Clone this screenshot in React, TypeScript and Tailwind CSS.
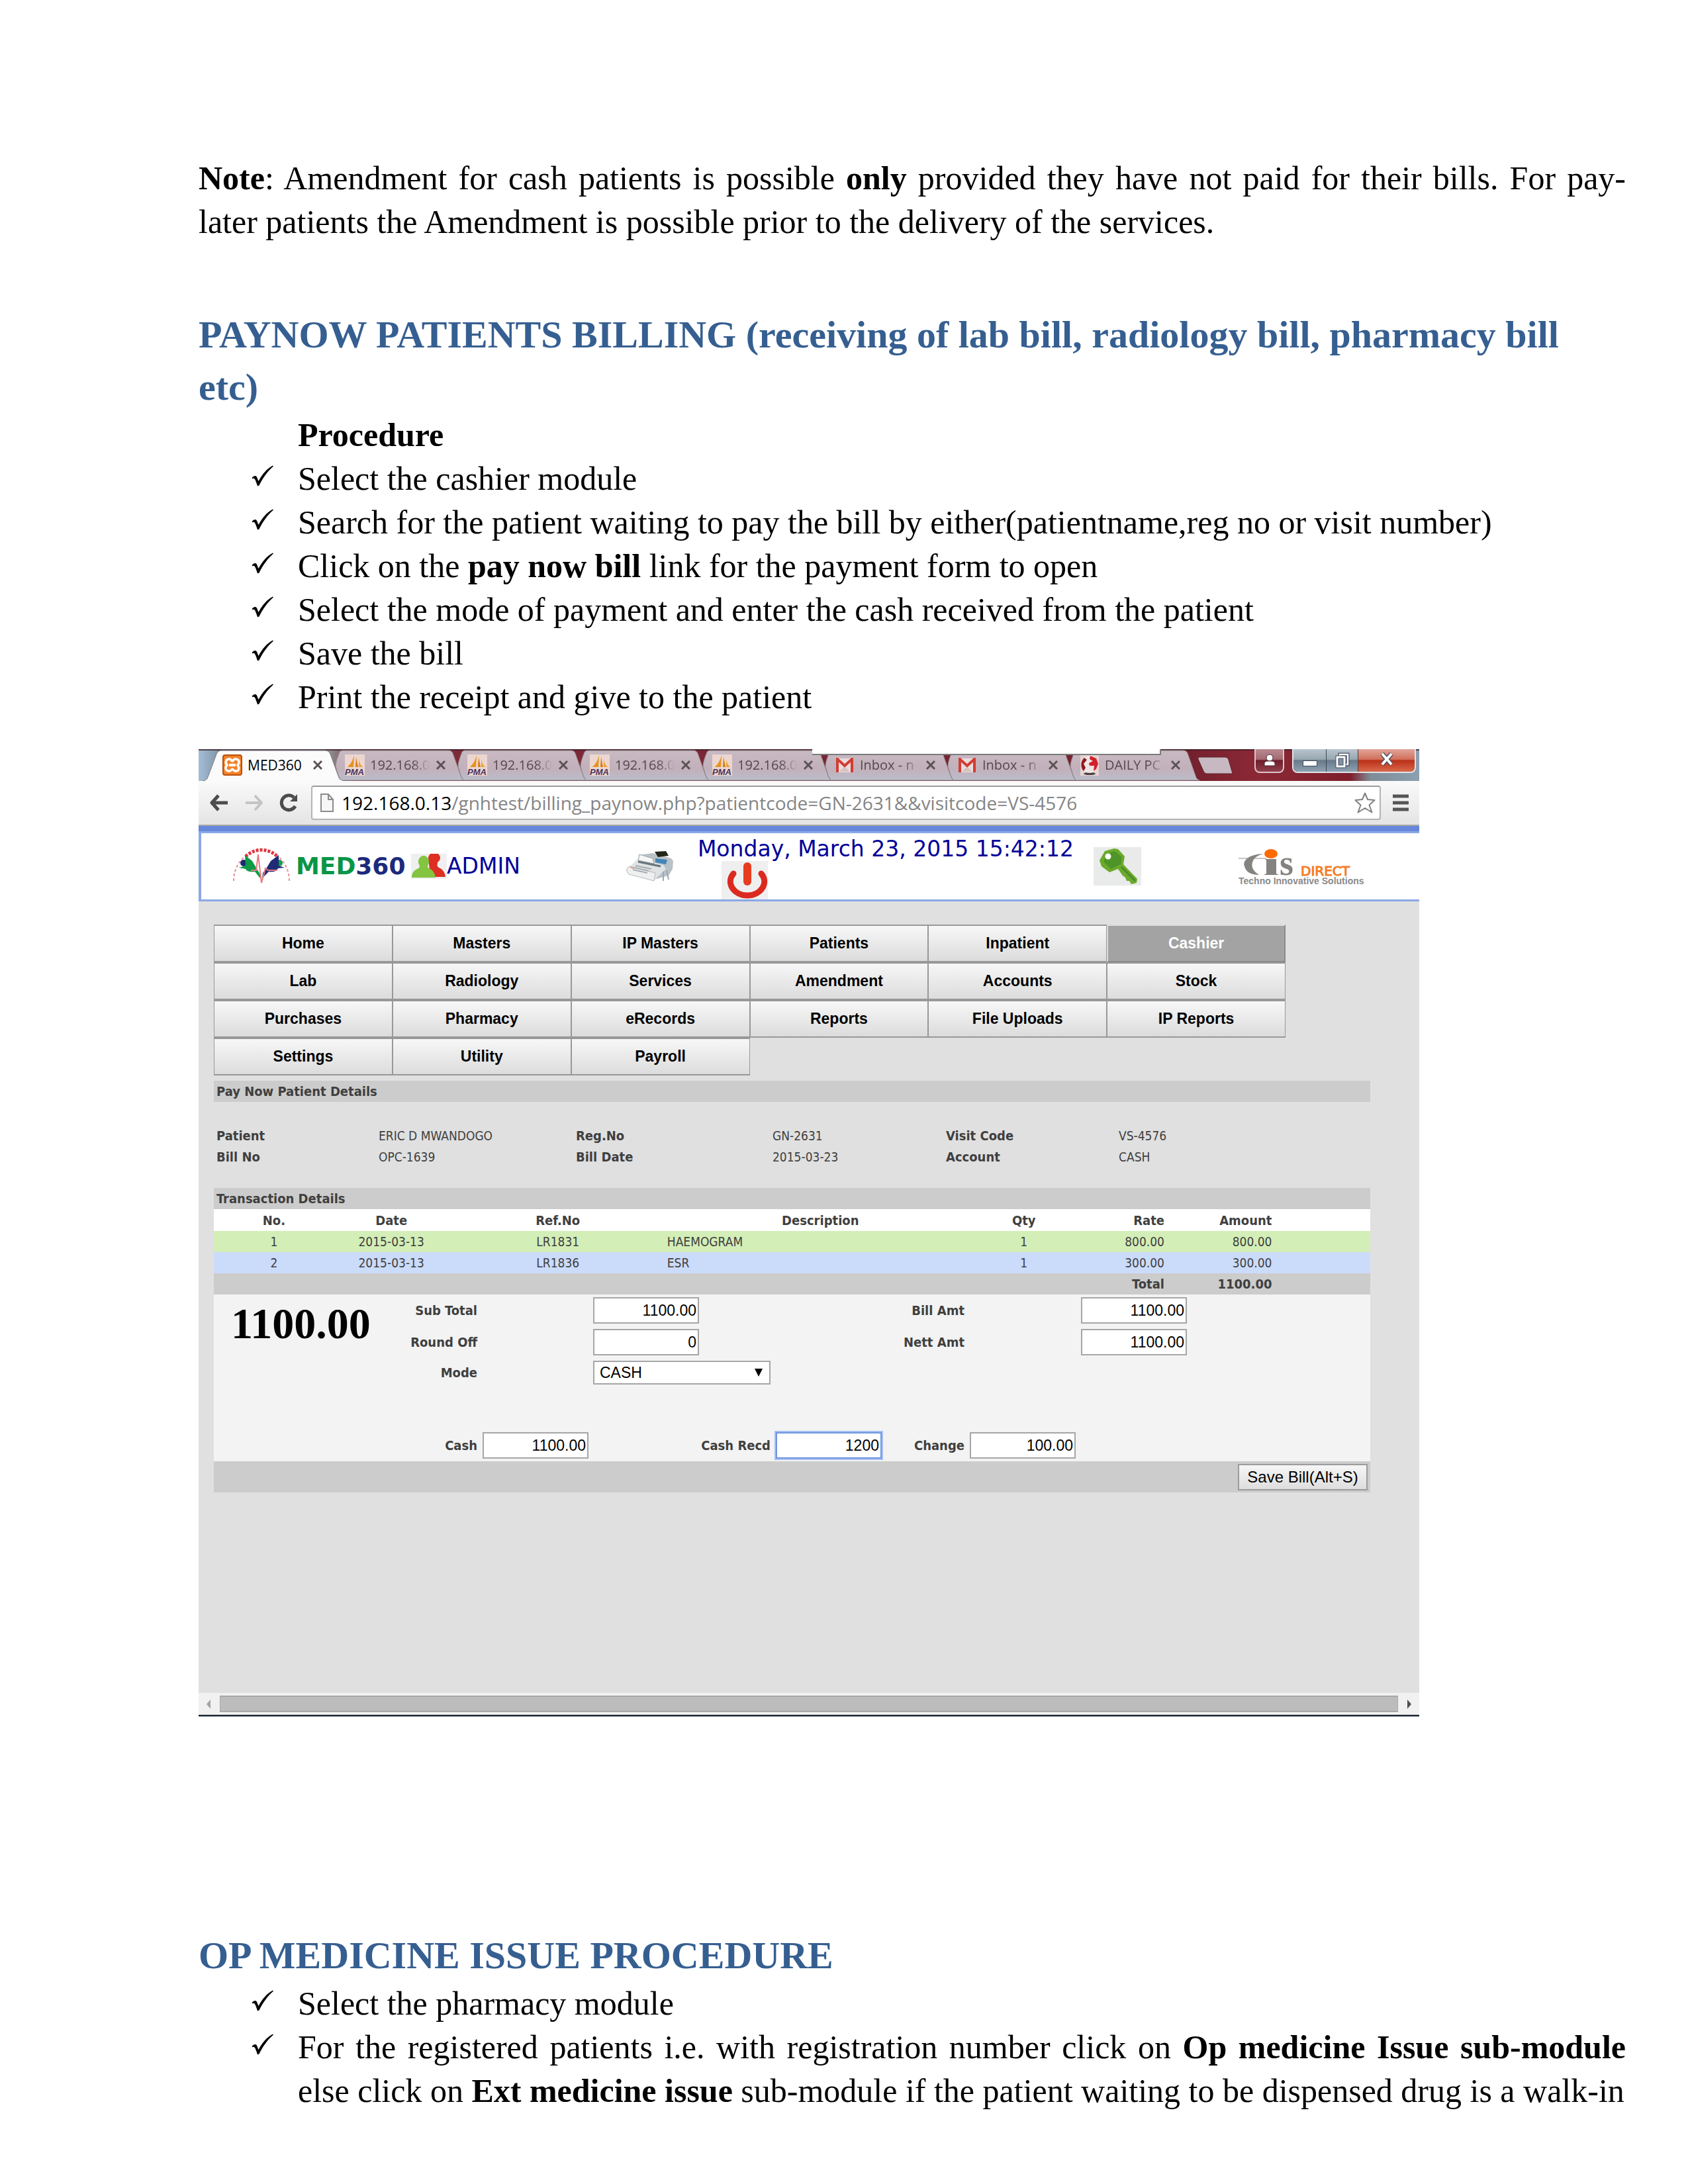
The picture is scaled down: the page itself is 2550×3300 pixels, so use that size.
import React from "react";

const navItems = [
  "Home", "Masters", "IP Masters", "Patients", "Inpatient", "Cashier",
  "Lab", "Radiology", "Services", "Amendment", "Accounts", "Stock",
  "Purchases", "Pharmacy", "eRecords", "Reports", "File Uploads", "IP Reports",
  "Settings", "Utility", "Payroll",
];

const transactions = [
  { no: 1, date: "2015-03-13", ref: "LR1831", description: "HAEMOGRAM", qty: 1, rate: "800.00", amount: "800.00", tone: "bg-[#d3eeb7]" },
  { no: 2, date: "2015-03-13", ref: "LR1836", description: "ESR", qty: 1, rate: "300.00", amount: "300.00", tone: "bg-[#cbdbfa]" },
];

const inactiveTabs = [
  { icon: "pma", label: "192.168.0" },
  { icon: "pma", label: "192.168.0" },
  { icon: "pma", label: "192.168.0" },
  { icon: "pma", label: "192.168.0" },
  { icon: "gmail", label: "Inbox - n" },
  { icon: "gmail", label: "Inbox - n" },
  { icon: "daily", label: "DAILY PC" },
];

/* ---------- document text ---------- */

function CheckBullet() {
  return (
    <svg viewBox="0 0 34 32" className="mt-[13px] h-8 w-[34px] shrink-0" aria-hidden="true">
      <path d="M1 18.5 C3 16 6 15 7.5 17 C9 19.500 9.500 22 10.500 24 C16 14 23 5 32 0.500 L33 1.500 C25 8 17 19 11.500 30.500 L9 31.500 C7.500 27 6 22 4.500 20.500 C3.500 19.500 2.500 19.500 1 20.500 Z" fill="#000" />
    </svg>
  );
}

function Step({ children }: { children: React.ReactNode }) {
  return (
    <li className="flex gap-9 pl-20">
      <CheckBullet />
      <span className="flex-1 text-justify">{children}</span>
    </li>
  );
}

function Heading({ children, className }: { children: React.ReactNode; className: string }) {
  return <h2 className={`text-[58px] leading-[79px] font-bold text-[#365f91] ${className}`}>{children}</h2>;
}

/* ---------- browser chrome ---------- */

function XamppIcon() {
  return (
    <svg viewBox="0 0 30 32" className="h-8 w-[30px] shrink-0" aria-hidden="true">
      <rect x="1" y="1" width="28" height="30" rx="3" fill="#f5822a" stroke="#b9500c" strokeWidth="2" />
      <path d="M9 7c4-1 5 3 6 3s2-4 6-3c5 1 5 6 2 9 3 4 2 9-2 9-4 1-5-3-6-3s-2 4-6 3c-5-1-5-6-2-9-3-3-2-8 2-9z" fill="none" stroke="#fff" strokeWidth="3.500" />
      <path d="M10 16h10" stroke="#fff" strokeWidth="4" />
    </svg>
  );
}

function PmaIcon() {
  return (
    <svg viewBox="0 0 30 32" className="h-8 w-[30px] shrink-0 overflow-visible" aria-hidden="true">
      <rect width="30" height="32" fill="#ecd6cf" />
      <path d="M14 1 C12 9 9 14 4 19 L13 19 Z" fill="#e5921c" />
      <path d="M17 4 L16 19 L20 19 Z" fill="#d97a12" />
      <path d="M21 5 C21 12 24 16 27 19 L21 19 Z" fill="#eda23a" />
      <text x="0" y="31" fontSize="13" fontWeight="700" fontStyle="italic" fontFamily="Liberation Sans, sans-serif" fill="#4a3260">PMA</text>
    </svg>
  );
}

function GmailIcon() {
  return (
    <svg viewBox="0 0 26 22" className="h-[22px] w-[26px] shrink-0" aria-hidden="true">
      <rect x="1" y="1" width="24" height="21" fill="#eadcdc" />
      <path d="M5 21 L13 13 L21 21 Z" fill="#d8c2c2" />
      <path d="M2 22 V2 L13 12 L24 2 V22" fill="none" stroke="#d23c33" strokeWidth="4" />
    </svg>
  );
}

function DailyIcon() {
  return (
    <svg viewBox="0 0 28 32" className="h-8 w-7 shrink-0" aria-hidden="true">
      <rect width="28" height="32" fill="#e6d3d2" />
      <ellipse cx="14" cy="29" rx="9" ry="2" fill="#4a4040" />
      <circle cx="14" cy="15" r="13" fill="#eee6e4" />
      <path d="M6 5 C0 10 0 20 5 25 L8 20 L5 14 L10 8 Z" fill="#8f1a20" />
      <path d="M15 2 L24 6 L27 14 L24 22 L20 25 L21 17 L14 17 L13 13 L19 10 L14 7 Z" fill="#d3202b" />
    </svg>
  );
}

function CloseGlyph() {
  return (
    <svg viewBox="0 0 14 14" className="h-3.5 w-3.5 shrink-0" aria-hidden="true">
      <path d="M1 1 L13 13 M13 1 L1 13" stroke="#5c5255" strokeWidth="3" />
    </svg>
  );
}

function TabStrip() {
  return (
    <div className="relative flex h-12 bg-[linear-gradient(90deg,#a3bdd6_0px,#8298a8_30px,#90a2a2_190px,#7f2c3a_240px,#75202e_1500px,#8c2836_1600px,#7e1f2c_1740px,#7f8c96_1770px,#8ba0b2_1844px)] pl-2.5">
      <div className="absolute inset-x-0 top-0 h-0.5 bg-[#3c2028]/80" />
      <button type="button" className="relative flex w-[200px] items-center pl-[26px] text-[21px] text-black">
        <svg viewBox="0 0 210 48" preserveAspectRatio="none" className="absolute top-0 -left-1 h-12 w-[214px]" aria-hidden="true">
          <path d="M0 48 C7 47 7 44 9 39 L20 9 C22 3 24 2 29 2 H181 C187 2 188 4 190 9 L201 40 C203 46 205 47 210 48 Z" fill="#fbfbfb" stroke="#7d7f85" strokeWidth="1" />
          <path d="M4 48 H207" stroke="#fbfbfb" strokeWidth="3" />
        </svg>
        <span className="relative flex items-center">
          <XamppIcon />
          <span className="ml-2 w-[99px] text-left">MED360</span>
          <CloseGlyph />
        </span>
      </button>
      {inactiveTabs.map((tab, i) => (
        <button key={i} type="button" className="relative flex w-[185px] items-center pl-[11px] text-[20px] text-[#55474d]">
          <svg viewBox="0 0 196 48" preserveAspectRatio="none" className="absolute top-0 -left-1 h-12 w-[196px]" aria-hidden="true">
            <defs>
              <linearGradient id={`tab-${i}`} x1="0" y1="0" x2="0" y2="1">
                <stop offset="0" stopColor="#c8bac3" />
                <stop offset="0.6" stopColor="#c2b0ba" />
                <stop offset="1" stopColor="#b9bdca" />
              </linearGradient>
            </defs>
            <path d="M10 47 C7 45 5 40 4 36 L1 26 C1 20 4 12 6 7 C7 3 9 2 12 2 H172 C176 2 178 5 179 9 L190 40 C191 44 193 46 196 47 Z" fill={`url(#tab-${i})`} stroke="#92898f" strokeWidth="1" />
          </svg>
          <span className="relative flex items-center">
            <span className="flex w-[30px] justify-center">
              {tab.icon === "pma" && <PmaIcon />}
              {tab.icon === "gmail" && <GmailIcon />}
              {tab.icon === "daily" && <DailyIcon />}
            </span>
            <span className="ml-2 w-[100px] text-left whitespace-nowrap [mask-image:linear-gradient(90deg,#000_65%,transparent_90%)]">{tab.label}</span>
            <CloseGlyph />
          </span>
        </button>
      ))}
      <button type="button" aria-label="New tab" className="relative mt-[11px] ml-1 h-7 w-[54px]">
        <svg viewBox="0 0 54 28" className="h-7 w-[54px]" aria-hidden="true">
          <path d="M3 1 H42 Q46 1 47 5 L53 26 H14 Q10 26 9 22 L1 4 Q0 1 3 1 Z" fill="#c7b8c1" stroke="#5d2630" />
        </svg>
      </button>
      <div className="absolute top-0 left-[927px] h-[9px] w-[527px] border-r-2 border-b-2 border-[#7c7c7c] bg-white" />
      <div className="absolute top-0 right-[5px] flex h-9 gap-3">
        <button type="button" aria-label="User" className="flex w-[45px] items-center justify-center rounded-b-lg border-2 border-t-0 border-[#ddc4ca] bg-[linear-gradient(180deg,#b98a92_0%,#a46a74_45%,#6e1c2a_50%,#90404d_100%)]">
          <svg viewBox="0 0 20 20" className="h-5 w-5" aria-hidden="true">
            <circle cx="10" cy="6" r="5" fill="#fff" stroke="#4a3036" />
            <path d="M2 18 V15 Q2 11 7 11 H13 Q18 11 18 15 V18 Z" fill="#fff" stroke="#4a3036" />
          </svg>
        </button>
        <div className="flex overflow-hidden rounded-b-lg border-2 border-t-0 border-[#dfe4e8]">
          <button type="button" aria-label="Minimize" className="flex w-[50px] items-end justify-center border-r border-[#3e4954] bg-[linear-gradient(180deg,#b9c4cc_0%,#98a7b1_45%,#67798a_50%,#8da2b2_100%)] pb-2">
            <span className="h-[9px] w-[22px] border border-[#3e4954] bg-white" />
          </button>
          <button type="button" aria-label="Restore" className="flex w-12 items-center justify-center border-r border-[#3e4954] bg-[linear-gradient(180deg,#b9c4cc_0%,#98a7b1_45%,#67798a_50%,#8da2b2_100%)]">
            <svg viewBox="0 0 24 24" className="h-6 w-6" aria-hidden="true">
              <rect x="8" y="3" width="12" height="15" fill="none" stroke="#454f63" strokeWidth="5" />
              <rect x="8" y="3" width="12" height="15" fill="none" stroke="#fff" strokeWidth="2.500" />
              <rect x="4" y="7" width="11" height="14" fill="#8190a0" stroke="#454f63" strokeWidth="5" />
              <rect x="4" y="7" width="11" height="14" fill="none" stroke="#fff" strokeWidth="3" />
            </svg>
          </button>
          <button type="button" aria-label="Close" className="flex w-[85px] items-center justify-center bg-[linear-gradient(180deg,#e0a598_0%,#d2705c_45%,#bb3018_50%,#d9694c_100%)]">
            <svg viewBox="0 0 22 20" className="mb-1 h-5 w-[22px]" aria-hidden="true">
              <path d="M4 2 L18 18 M18 2 L4 18" stroke="#4d5065" strokeWidth="7" />
              <path d="M4 2 L18 18 M18 2 L4 18" stroke="#fff" strokeWidth="4" />
            </svg>
          </button>
        </div>
      </div>
    </div>
  );
}

function Toolbar() {
  return (
    <div className="flex h-[68px] items-center border-b-2 border-[#a8a8a8] bg-[linear-gradient(180deg,#fafafa,#e4e4e4)] pr-4 pl-[17px]">
      <button type="button" aria-label="Back" className="mr-[25px]">
        <svg viewBox="0 0 28 26" className="h-[26px] w-7" aria-hidden="true">
          <path d="M13 2 L3 13 L13 24 M3 13 H27" fill="none" stroke="#4c4c4c" strokeWidth="5" strokeLinejoin="round" />
        </svg>
      </button>
      <button type="button" aria-label="Forward" className="mr-6">
        <svg viewBox="0 0 28 26" className="h-[26px] w-7" aria-hidden="true">
          <path d="M15 2 L25 13 L15 24 M25 13 H1" fill="none" stroke="#c4c4c4" strokeWidth="4" strokeLinejoin="round" />
        </svg>
      </button>
      <button type="button" aria-label="Reload" className="mr-5">
        <svg viewBox="0 0 28 28" className="h-7 w-7" aria-hidden="true">
          <path d="M24 19 A11 11 0 1 1 22 6" fill="none" stroke="#4c4c4c" strokeWidth="5" />
          <path d="M27 1 V12 H16 Z" fill="#4c4c4c" />
        </svg>
      </button>
      <div className="flex h-[52px] flex-1 items-center rounded-sm border-2 border-[#b4b4b4] border-t-[#9c9c9c] bg-white pr-1.5 pl-3">
        <svg viewBox="0 0 20 28" className="mr-3 h-7 w-5 shrink-0" aria-hidden="true">
          <path d="M1 1 H12 L19 9 V27 H1 Z" fill="#f6f6f6" stroke="#8b8b8b" strokeWidth="2" />
          <path d="M12 1 V9 H19" fill="none" stroke="#8b8b8b" strokeWidth="2" />
        </svg>
        <a href="#billing" className="flex-1 text-[28px] leading-9 whitespace-nowrap text-[#858585]">
          <span className="text-black">192.168.0.13</span>/gnhtest/billing_paynow.php?patientcode=GN-2631&amp;&amp;visitcode=VS-4576
        </a>
        <svg viewBox="0 0 32 32" className="h-8 w-8 shrink-0" aria-hidden="true">
          <path d="M16 1.500 L20 11 L30.500 12 L22.500 19.500 L26.500 30.500 L16 24 L5.500 30.500 L9.500 19.500 L1.500 12 L12 11 Z" fill="#fff" stroke="#808080" strokeWidth="2" strokeLinejoin="round" />
        </svg>
      </div>
      <button type="button" aria-label="Menu" className="ml-[18px]">
        <svg viewBox="0 0 24 26" className="h-[26px] w-6" aria-hidden="true">
          <path d="M0 3 H24 M0 13 H24 M0 23 H24" stroke="#555" strokeWidth="5" />
        </svg>
      </button>
    </div>
  );
}

/* ---------- application header ---------- */

function Med360Mark() {
  return (
    <svg viewBox="0 0 88 56" className="h-14 w-[88px] shrink-0" aria-hidden="true">
      <path d="M2 50 C2 36 8 22 18 14" fill="none" stroke="#ee8f95" strokeWidth="2" strokeDasharray="4 3" />
      <path d="M86 50 C86 36 80 22 70 14" fill="none" stroke="#ee8f95" strokeWidth="2" strokeDasharray="4 3" />
      <path d="M20 13 C34 0 54 0 68 13" fill="none" stroke="#e2333c" strokeWidth="5" strokeDasharray="4 2" />
      <circle cx="17" cy="23" r="5" fill="#1d2a72" />
      <circle cx="71" cy="23" r="5" fill="#13a04a" />
      <path d="M19 11 L30 20 L36 30 L42 40 L42 46 L34 36 C27 37 22 36 20 32 L10 30 L20 27 Z" fill="#0e9a47" />
      <path d="M70 11 L58 20 L52 30 L46 38 L45 46 L55 36 C62 37 66 36 69 31 L79 30 L70 27 Z" fill="#1f2c75" />
      <path d="M28 34 H36 L39 10 L44 53 L50 31 L54 34 L68 34" fill="none" stroke="#ea7a80" strokeWidth="2" />
    </svg>
  );
}

function PeopleIcon() {
  return (
    <svg viewBox="0 0 54 38" className="h-[38px] w-[54px] shrink-0" aria-hidden="true">
      <rect width="54" height="38" fill="#efefef" />
      <path d="M26 7 A9 8 0 1 1 40 13 C40 18 38 18 42 21 C49 24 51 29 52 35 H36 L28 24 Z" fill="#dd2f22" />
      <path d="M19 3 A9 9 0 0 1 27 14 C25 18 24 20 27 22 C34 25 36 30 37 36 H1 C1 29 4 25 11 22 C14 20 13 18 11 14 A9 9 0 0 1 19 3 Z" fill="#83c441" />
    </svg>
  );
}

function RegisterIcon() {
  return (
    <svg viewBox="0 0 72 48" className="h-12 w-[72px] shrink-0" aria-hidden="true">
      <path d="M18 7 L40 4 L68 12 L71 16 L70 28 L64 38 L42 44 L40 30 Z" fill="#b9c2c8" />
      <path d="M2 28 L18 12 L56 22 L60 28 L42 45 L8 36 Z" fill="#dfe3e4" />
      <path d="M0 30 L4 24 L44 34 L42 46 L4 36 Z" fill="#eef0f0" stroke="#b5babc" />
      <path d="M20 6 L40 12 L42 20 L18 15 Z" fill="#f4f5f5" stroke="#9aa2a6" />
      <path d="M43 2 L60 1 L64 8 L48 10 Z" fill="#222718" />
      <path d="M44 12 L62 14 L60 21 L44 18 Z" fill="#4286b8" />
      <path d="M18 17 L52 24" stroke="#67757b" strokeWidth="3" />
      <path d="M12 26 L34 31 M14 23 L38 28 M10 29 L32 34" stroke="#a7adb0" strokeWidth="2" />
      <path d="M6 25 L12 27" stroke="#d99a92" strokeWidth="2" />
      <path d="M56 32 V46 M61 30 L64 44" stroke="#9ca8ae" strokeWidth="2" />
    </svg>
  );
}

function PowerIcon() {
  return (
    <svg viewBox="0 0 70 58" className="h-[58px] w-[70px]" aria-hidden="true">
      <rect width="70" height="58" fill="#efefef" />
      <path d="M18 19 A26 21 0 0 0 39 52 A26 21 0 0 0 60 19" fill="none" stroke="#db2a20" strokeWidth="9" strokeLinecap="round" />
      <path d="M39 8 V31" stroke="#e63c1f" strokeWidth="12" strokeLinecap="round" />
    </svg>
  );
}

function KeyIcon() {
  return (
    <svg viewBox="0 0 72 58" className="h-[58px] w-[72px] shrink-0" aria-hidden="true">
      <rect width="72" height="58" fill="#e9eaea" />
      <path d="M17 6 L31 2 L37 3 L47 14 L45 26 L66 48 L65 54 L57 56 L54 51 L50 51 L48 46 L44 43 L37 33 L24 38 L12 29 L9 20 Z" fill="#6aaa2c" />
      <path d="M20 10 L32 6 L43 15 L41 26 L26 33 L15 22 Z" fill="#4f9428" />
      <path d="M42 30 L63 51" stroke="#4b8b27" strokeWidth="3" />
      <circle cx="22" cy="14" r="4.500" fill="#fff" />
    </svg>
  );
}

function CisLogo() {
  return (
    <svg viewBox="0 0 196 54" className="h-[54px] w-[196px] shrink-0 overflow-visible" role="img" aria-label="CIS Direct - Techno Innovative Solutions">
      <path d="M0 15 H42" stroke="#b5b3b0" strokeWidth="1.500" />
      <path d="M38 8 C14 9 6 19 9 27 C11 35 18 40 31 40 C22 34 19 28 21 21 C23 14 29 10 38 8 Z" fill="#85837f" />
      <ellipse cx="49" cy="8" rx="10" ry="7" fill="#ff6a00" />
      <path d="M40 16 H57 V38 L61 40 H38 L42 38 V18 Z" fill="#85837f" />
      <text x="62" y="40" fontSize="54" fontWeight="700" fontFamily="Liberation Serif, serif" fill="#85837f">s</text>
      <text x="94" y="41" fontSize="20" fontFamily="DejaVu Sans, sans-serif" fill="#f57b22" stroke="#f57b22">DIRECT</text>
      <text x="0" y="54" fontSize="14" fontFamily="Liberation Sans, sans-serif" fontWeight="700" fill="#8a8a8a">Techno Innovative Solutions</text>
    </svg>
  );
}

function AppHeader() {
  return (
    <header className="border-t-8 border-[#6686da]">
      <div className="flex h-[106px] border-y-[3px] border-l-4 border-[#8aa8e6] bg-white pr-[77px] pl-[47px] font-['DejaVu_Sans',sans-serif] text-[33px] leading-9 text-[#000099]">
        <div className="flex items-center">
          <Med360Mark />
          <span className="ml-2 w-[174px] text-[36px] font-bold text-[#1c2a7c]">
            <span className="text-[#079647]">MED</span>360
          </span>
          <PeopleIcon />
          <span>ADMIN</span>
        </div>
        <div className="ml-40 flex items-center">
          <RegisterIcon />
        </div>
        <div className="ml-9 flex flex-col">
          <time className="pt-1.5">Monday, March 23, 2015 15:42:12</time>
          <button type="button" aria-label="Log out" className="ml-9 h-[58px] w-[70px]">
            <PowerIcon />
          </button>
        </div>
        <div className="ml-[30px] flex items-center">
          <KeyIcon />
        </div>
        <div className="ml-auto flex items-center">
          <CisLogo />
        </div>
      </div>
    </header>
  );
}

/* ---------- billing page ---------- */

function SectionBar({ children }: { children: React.ReactNode }) {
  return <h3 className="h-8 bg-[#cccccc] pl-1 leading-8 font-bold">{children}</h3>;
}

function Field({ id, label, value, cell, labelCell, focused }: { id: string; label: string; value: string; cell: string; labelCell: string; focused?: boolean }) {
  return (
    <>
      <label htmlFor={id} className={`self-center pr-1 text-right font-bold whitespace-nowrap ${labelCell}`}>{label}</label>
      <div className={`self-center pl-1 ${cell}`}>
        <input
          id={id}
          defaultValue={value}
          className={`block h-10 w-40 border-2 bg-white pr-0.5 text-right font-['Liberation_Sans',sans-serif] text-[23px] text-black ${focused ? "border-[#7096dc] outline-2 outline-[#a3c0f5]" : "border-[#a6a6a6]"}`}
        />
      </div>
    </>
  );
}

function BillingPage() {
  return (
    <main className="bg-[#e0e0e0] pt-[35px] pr-[74px] pb-[303px] pl-[23px] font-['DejaVu_Sans_Condensed','Noto_Sans',sans-serif] text-[20px] text-[#3f3f3f]">
      <nav className="mr-32 grid grid-cols-6">
        {navItems.map((item) => (
          <button
            key={item}
            type="button"
            className={
              item === "Cashier"
                ? "h-[57px] border-2 border-t-[#dcdcdc] border-r-[#8a8a8a] border-b-[#8a8a8a] border-l-[#dcdcdc] bg-[#a3a3a3] font-['Liberation_Sans',sans-serif] text-[23px] font-bold text-white"
                : "h-[57px] border-x border-y-2 border-[#989898] bg-[linear-gradient(180deg,#f7f7f7,#dcdcdc)] font-['Liberation_Sans',sans-serif] text-[23px] font-bold text-black"
            }
          >
            {item}
          </button>
        ))}
      </nav>

      <div className="mt-2">
        <SectionBar>Pay Now Patient Details</SectionBar>
      </div>
      <dl className="grid grid-cols-[245fr_298fr_297fr_262fr_261fr_384fr] pt-[35px] pb-[31px] leading-8">
        <dt className="pl-1 font-bold">Patient</dt>
        <dd className="pl-1 text-[19px]">ERIC D MWANDOGO</dd>
        <dt className="pl-1 font-bold">Reg.No</dt>
        <dd className="pl-1 text-[19px]">GN-2631</dd>
        <dt className="pl-1 font-bold">Visit Code</dt>
        <dd className="pl-1 text-[19px]">VS-4576</dd>
        <dt className="pl-1 font-bold">Bill No</dt>
        <dd className="pl-1 text-[19px]">OPC-1639</dd>
        <dt className="pl-1 font-bold">Bill Date</dt>
        <dd className="pl-1 text-[19px]">2015-03-23</dd>
        <dt className="pl-1 font-bold">Account</dt>
        <dd className="pl-1 text-[19px]">CASH</dd>
      </dl>

      <SectionBar>Transaction Details</SectionBar>
      <table className="w-full table-fixed border-collapse leading-8">
        <colgroup>
          <col className="w-[10.4%]" />
          <col className="w-[9.9%]" />
          <col className="w-[18.9%]" />
          <col className="w-[26.5%]" />
          <col className="w-[8.7%]" />
          <col className="w-[7.8%]" />
          <col className="w-[9.3%]" />
          <col />
        </colgroup>
        <thead>
          <tr className="h-[33px] bg-white">
            <th>No.</th>
            <th>Date</th>
            <th>Ref.No</th>
            <th>Description</th>
            <th>Qty</th>
            <th className="text-right">Rate</th>
            <th className="text-right">Amount</th>
            <td />
          </tr>
        </thead>
        <tbody>
          {transactions.map((row) => (
            <tr key={row.no} className={`text-center text-[19px] ${row.tone}`}>
              <td>{row.no}</td>
              <td>{row.date}</td>
              <td>{row.ref}</td>
              <td className="text-left">{row.description}</td>
              <td>{row.qty}</td>
              <td className="text-right">{row.rate}</td>
              <td className="text-right">{row.amount}</td>
              <td />
            </tr>
          ))}
          <tr className="bg-[#cccccc] text-right font-bold">
            <td colSpan={6}>Total</td>
            <td>1100.00</td>
            <td />
          </tr>
        </tbody>
      </table>

      <form className="bg-[#f3f3f3]" onSubmit={(e) => e.preventDefault()}>
        <div className="grid grid-cols-[242fr_160fr_167fr_276fr_168fr_125fr_168fr_441fr] grid-rows-[48px_48px_44px_64px_48px]">
          <output className="col-start-1 row-span-2 row-start-1 pl-[26px] font-['Liberation_Serif',serif] text-[66px] leading-[88px] font-bold text-black">1100.00</output>
          <Field id="sub-total" label="Sub Total" value="1100.00" labelCell="col-start-2 row-start-1" cell="col-start-4 row-start-1" />
          <Field id="bill-amt" label="Bill Amt" value="1100.00" labelCell="col-start-6 row-start-1" cell="col-start-8 row-start-1" />
          <Field id="round-off" label="Round Off" value="0" labelCell="col-start-2 row-start-2" cell="col-start-4 row-start-2" />
          <Field id="nett-amt" label="Nett Amt" value="1100.00" labelCell="col-start-6 row-start-2" cell="col-start-8 row-start-2" />
          <label htmlFor="mode" className="col-start-2 row-start-3 self-center pr-1 text-right font-bold">Mode</label>
          <div className="relative col-start-4 row-start-3 self-center px-1">
            <select id="mode" defaultValue="CASH" className="block h-9 w-full appearance-none border-2 border-[#a6a6a6] bg-white pl-2 font-['Liberation_Sans',sans-serif] text-[23px] leading-8 text-black">
              <option>CASH</option>
            </select>
            <svg viewBox="0 0 12 12" className="pointer-events-none absolute top-3 right-4 h-3 w-3" aria-hidden="true">
              <path d="M0 0 H12 L6 12 Z" fill="#000" />
            </svg>
          </div>
          <Field id="cash" label="Cash" value="1100.00" labelCell="col-start-2 row-start-5" cell="col-start-3 row-start-5" />
          <Field id="cash-recd" label="Cash Recd" value="1200" labelCell="col-start-4 row-start-5" cell="col-start-5 row-start-5" focused />
          <Field id="change" label="Change" value="100.00" labelCell="col-start-6 row-start-5" cell="col-start-7 row-start-5" />
        </div>
        <div className="flex h-[47px] items-center justify-end bg-[#cccccc] pr-1">
          <button type="submit" className="h-10 w-[196px] border-2 border-[#9c9c9c] bg-[linear-gradient(180deg,#f6f6f6,#dedede)] font-['Liberation_Sans',sans-serif] text-[24px] whitespace-nowrap text-black">
            Save Bill(Alt+S)
          </button>
        </div>
      </form>
    </main>
  );
}

function ScrollBar() {
  return (
    <div className="flex h-[33px] items-center gap-3.5 bg-[#f1f1f1] px-3">
      <svg viewBox="0 0 6 14" className="h-3.5 w-1.5" aria-hidden="true">
        <path d="M6 0 V14 L0 7 Z" fill="#a3a3a3" />
      </svg>
      <div className="h-[25px] flex-1 border-x border-y-2 border-[#a8a8a8] bg-[#bcbcbc]" />
      <svg viewBox="0 0 6 14" className="h-3.5 w-1.5" aria-hidden="true">
        <path d="M0 0 V14 L6 7 Z" fill="#505050" />
      </svg>
    </div>
  );
}

export default function App() {
  return (
    <article className="min-h-screen bg-white pt-[236px] pr-[94px] pb-[106px] pl-[300px] font-['Liberation_Serif',serif] text-[50px] leading-[66px] text-black">
      <p className="text-justify">
        <b>Note</b>: Amendment for cash patients is possible <b>only</b> provided they have not paid for their bills. For pay-later patients the Amendment is possible prior to the delivery of the services.
      </p>

      <Heading className="mt-[98px]">PAYNOW PATIENTS BILLING (receiving of lab bill, radiology bill, pharmacy bill etc)</Heading>
      <p className="pl-[150px] font-bold">Procedure</p>
      <ul>
        <Step>Select the cashier module</Step>
        <Step>Search for the patient waiting to pay the bill by either(patientname,reg no or visit number)</Step>
        <Step>Click on the <b>pay now bill</b> link for the payment form to open</Step>
        <Step>Select the mode of payment and enter the cash received from the patient</Step>
        <Step>Save the bill</Step>
        <Step>Print the receipt and give to the patient</Step>
      </ul>

      <figure className="mt-[46px] mr-[312px] font-['Open_Sans',sans-serif] leading-none">
        <TabStrip />
        <Toolbar />
        <AppHeader />
        <BillingPage />
        <ScrollBar />
        <div className="h-[3px] border-b border-[#7f8b95] bg-[#1e2833]" />
      </figure>

      <Heading className="mt-[321px]">OP MEDICINE ISSUE PROCEDURE</Heading>
      <ul>
        <Step>Select the pharmacy module</Step>
        <Step>
          For the registered patients i.e. with registration number click on <b>Op medicine Issue sub-module</b> else click on <b>Ext medicine issue</b> sub-module if the patient waiting to be dispensed drug is a walk-in
        </Step>
      </ul>
    </article>
  );
}
